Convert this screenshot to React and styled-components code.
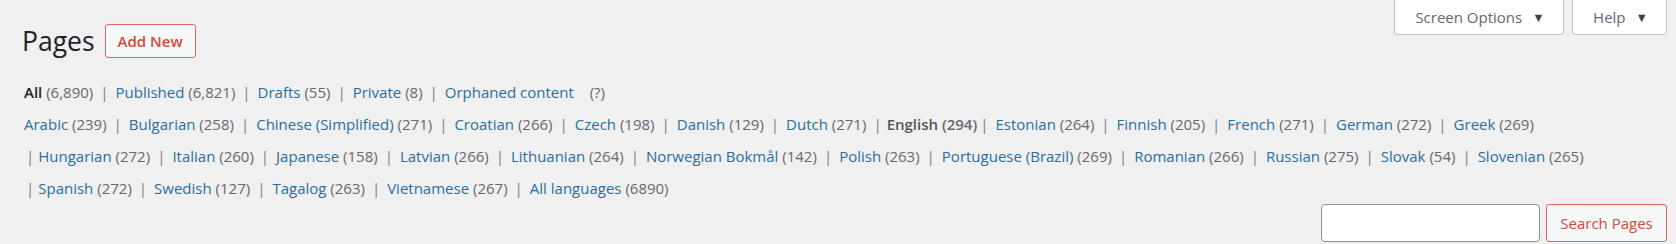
import React from "react";
import styled, { createGlobalStyle } from "styled-components";

const GlobalStyle = createGlobalStyle`
  body {
    margin: 0;
    background: #f0f0f1;
    font-family: "Open Sans", "Noto Sans", sans-serif;
    color: #3c434a;
  }
`;

const Page = styled.div`
  padding: 0 9px 0 22px;
`;

const Header = styled.div`
  display: flex;
  justify-content: space-between;
  align-items: flex-start;
`;

const TitleRow = styled.div`
  display: flex;
  align-items: center;
  gap: 10px;
  margin-top: 24px;
`;

const Title = styled.h1`
  margin: 0;
  font-size: 26.5px;
  font-weight: 400;
  color: #1d2327;
  line-height: 34px;
`;

const AddNew = styled.a`
  display: inline-flex;
  align-items: center;
  justify-content: center;
  box-sizing: border-box;
  width: 91px;
  height: 34px;
  border: 1px solid #d9675c;
  border-radius: 3px;
  background: #f6f7f7;
  color: #cf4a3c;
  font-size: 15px;
  font-weight: 600;
  text-decoration: none;
`;

const MetaLinks = styled.div`
  display: flex;
  gap: 8px;
`;

const MetaButton = styled.button`
  box-sizing: border-box;
  width: ${(p) => p.w}px;
  height: 35px;
  border: 1px solid #c3c4c7;
  border-top: none;
  border-radius: 0 0 4px 4px;
  background: #fff;
  color: #646970;
  font-family: inherit;
  font-size: 15px;
  display: flex;
  align-items: center;
  justify-content: center;
  gap: 10px;
  padding: 0 0 0 2px;
`;

const Arrow = styled.span`
  font-size: 12.5px;
  color: #3c434a;
`;

const Filters = styled.div`
  margin-top: 18px;
  display: flex;
  flex-direction: column;
`;

const Row = styled.div`
  display: flex;
  align-items: center;
  height: 32px;
  font-size: 15px;
  white-space: pre;
  padding-left: ${(p) => (p.lead ? 4 : 2)}px;
`;

const Item = styled.a`
  color: ${(p) => (p.current ? (p.dark ? "#1d2327" : "#50575e") : "#2a6f9b")};
  font-weight: ${(p) => (p.current ? 600 : 400)};
  text-decoration: none;
`;

const Count = styled.span`
  color: #646970;
  font-weight: ${(p) => (p.plain ? 400 : "inherit")};
  margin-left: ${(p) => (p.wide ? 12 : 0)}px;
`;

const Sep = styled.span`
  color: #787c82;
  margin: 0 ${(p) => p.right}px 0 ${(p) => p.left}px;
`;

const SearchRow = styled.div`
  display: flex;
  justify-content: flex-end;
  gap: 6px;
`;

const SearchInput = styled.input`
  box-sizing: border-box;
  width: 219px;
  height: 38px;
  border: 1px solid #8c8f94;
  border-radius: 4px;
  background: #fff;
`;

const SearchButton = styled.button`
  box-sizing: border-box;
  width: 121px;
  height: 38px;
  border: 1px solid #d9675c;
  border-radius: 3px;
  background: #f6f7f7;
  color: #cf4a3c;
  font-family: inherit;
  font-size: 15px;
`;

const rows = [
  {
    items: [
      ["All", "(6,890)", "current-dark"],
      ["Published", "(6,821)"],
      ["Drafts", "(55)"],
      ["Private", "(8)"],
      ["Orphaned content", "(?)", "wide"],
    ],
  },
  {
    items: [
      ["Arabic", "(239)"],
      ["Bulgarian", "(258)"],
      ["Chinese (Simplified)", "(271)"],
      ["Croatian", "(266)"],
      ["Czech", "(198)"],
      ["Danish", "(129)"],
      ["Dutch", "(271)"],
      ["English", "(294)", "current"],
      ["Estonian", "(264)"],
      ["Finnish", "(205)"],
      ["French", "(271)"],
      ["German", "(272)"],
      ["Greek", "(269)"],
    ],
  },
  {
    lead: true,
    items: [
      ["Hungarian", "(272)"],
      ["Italian", "(260)"],
      ["Japanese", "(158)"],
      ["Latvian", "(266)"],
      ["Lithuanian", "(264)"],
      ["Norwegian Bokmål", "(142)"],
      ["Polish", "(263)"],
      ["Portuguese (Brazil)", "(269)"],
      ["Romanian", "(266)"],
      ["Russian", "(275)"],
      ["Slovak", "(54)"],
      ["Slovenian", "(265)"],
    ],
  },
  {
    lead: true,
    items: [
      ["Spanish", "(272)"],
      ["Swedish", "(127)"],
      ["Tagalog", "(263)"],
      ["Vietnamese", "(267)"],
      ["All languages", "(6890)"],
    ],
  },
];

const FilterRow = ({ row }) => (
  <Row lead={row.lead}>
    {row.items.map(([label, count, state], i) => {
      const prev = row.items[i - 1];
      const isCurrent = state === "current" || state === "current-dark";
      const afterCurrent = prev && prev[2] === "current";
      return (
        <React.Fragment key={label}>
          {(i > 0 || row.lead) && (
            <Sep
              left={i === 0 ? 0 : afterCurrent ? 3 : 7}
              right={i === 0 ? 4 : state === "current" ? 5 : 7}
            >
              |
            </Sep>
          )}
          <Item
            href="#"
            current={isCurrent ? 1 : 0}
            dark={state === "current-dark" ? 1 : 0}
          >
            {label}{" "}
            <Count
              wide={state === "wide" ? 1 : 0}
              plain={state === "current-dark" ? 1 : 0}
            >
              {count}
            </Count>
          </Item>
        </React.Fragment>
      );
    })}
  </Row>
);

export default function App() {
  return (
    <Page>
      <GlobalStyle />
      <Header>
        <TitleRow>
          <Title>Pages</Title>
          <AddNew href="#">Add New</AddNew>
        </TitleRow>
        <MetaLinks>
          <MetaButton w={170}>
            Screen Options <Arrow>▼</Arrow>
          </MetaButton>
          <MetaButton w={95}>
            Help <Arrow>▼</Arrow>
          </MetaButton>
        </MetaLinks>
      </Header>
      <Filters>
        {rows.map((row, i) => (
          <FilterRow key={i} row={row} />
        ))}
      </Filters>
      <SearchRow>
        <SearchInput type="search" />
        <SearchButton>Search Pages</SearchButton>
      </SearchRow>
    </Page>
  );
}
